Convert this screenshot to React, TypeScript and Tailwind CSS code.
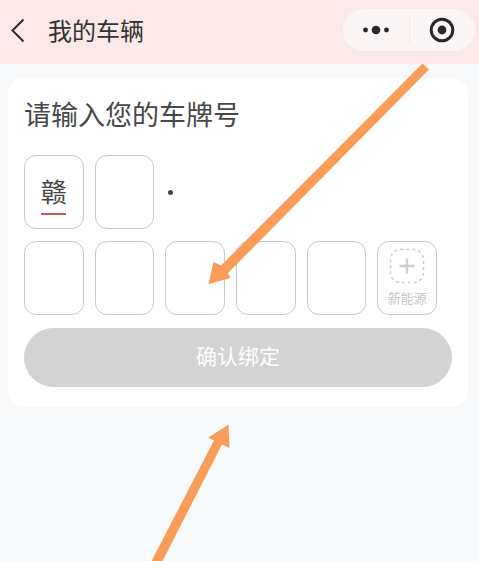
import type { InputHTMLAttributes } from "react";

const cell =
  "h-[74px] w-full min-w-0 rounded-xl border border-[#c9c9c9] bg-white text-center text-[26px] text-[#444] outline-none";

function PlateCell(props: InputHTMLAttributes<HTMLInputElement>) {
  return <input type="text" maxLength={1} className={cell} {...props} />;
}

function Header() {
  return (
    <header className="flex h-16 items-center bg-[#fbe9ea] pr-1 pb-1 pl-2 text-[#333]">
      <button type="button" aria-label="返回" className="flex h-8 w-10 items-center">
        <svg viewBox="0 0 20 26" className="h-[26px] w-5" fill="none" stroke="#2e2a2b" strokeWidth="2">
          <path d="M15.5 2.5 4.5 13.5 15.5 24.5" />
        </svg>
      </button>
      <h1 className="text-2xl">我的车辆</h1>
      <div className="ml-auto flex h-[42px] w-[132px] items-center rounded-full bg-[#fcf5f5]">
        <button type="button" aria-label="更多" className="flex h-full flex-1 items-center justify-center">
          <svg viewBox="0 0 26 10" className="h-[10px] w-[26px]" fill="#2a2627">
            <circle cx="2.5" cy="5" r="2.4" />
            <circle cx="13" cy="5" r="4.3" />
            <circle cx="23.5" cy="5" r="2.4" />
          </svg>
        </button>
        <span className="h-7 w-px bg-[#f3e8e9]" />
        <button type="button" aria-label="关闭" className="flex h-full flex-1 items-center justify-center">
          <svg viewBox="0 0 26 26" className="size-[26px]">
            <circle cx="13" cy="13" r="10.8" fill="none" stroke="#2a2627" strokeWidth="3" />
            <circle cx="13" cy="13" r="4.4" fill="#2a2627" />
          </svg>
        </button>
      </div>
    </header>
  );
}

function Arrows() {
  return (
    <svg
      viewBox="0 0 479 561"
      className="pointer-events-none absolute top-0 left-0 h-[561px] w-[479px]"
      fill="#f99c58"
      aria-hidden="true"
    >
      <path d="M422.5 63.5 429 69.5 228 273 230.5 278 208.5 284 213.5 262 221 265.5Z" />
      <path d="M228.5 424.5 229.5 448 222 444.5 162 562 151 562 214 440.5 208.5 437.5Z" />
    </svg>
  );
}

export default function App() {
  return (
    <div className="relative min-h-screen overflow-hidden bg-[#f7f9fa] font-['Noto_Sans_CJK_SC',sans-serif]">
      <Header />
      <main className="mt-[14px] mr-[11px] ml-2 rounded-2xl bg-white px-4 pt-4 pb-5">
        <h2 className="text-[27px] leading-10 text-[#484848]">请输入您的车牌号</h2>
        <form onSubmit={(e) => e.preventDefault()}>
          <div className="mt-[21px] mr-[15px] grid grid-cols-6 gap-x-[11px] gap-y-3">
            <button type="button" aria-label="省份 赣" className={`${cell} flex flex-col items-center justify-center`}>
              <span className="mt-1 leading-9">赣</span>
              <span className="mt-1 h-[2px] w-[25px] bg-[#c9545c]" />
            </button>
            <PlateCell aria-label="第2位" />
            <span className="ml-[3px] size-[5px] self-center rounded-full bg-[#444]" />
            <PlateCell aria-label="第3位" className={`${cell} col-start-1`} />
            <PlateCell aria-label="第4位" />
            <PlateCell aria-label="第5位" />
            <PlateCell aria-label="第6位" />
            <PlateCell aria-label="第7位" />
            <button type="button" className={`${cell} flex flex-col items-center`}>
              <svg viewBox="0 0 36 36" className="mt-[6px] size-9 shrink-0" fill="none" stroke="#cfcfcf">
                <rect x="1.5" y="1.5" width="33" height="33" rx="10" strokeWidth="1.5" strokeDasharray="3 3" />
                <path d="M18 10.5v15M10.5 18h15" strokeWidth="2.4" />
              </svg>
              <span className="mt-1 text-[13px] leading-5 text-[#c8c8c8]">新能源</span>
            </button>
          </div>
          <button
            type="submit"
            className="mt-[13px] h-[59px] w-full rounded-full bg-[#d3d3d3] pb-1 text-[21px] text-white"
          >
            确认绑定
          </button>
        </form>
      </main>
      <Arrows />
    </div>
  );
}
